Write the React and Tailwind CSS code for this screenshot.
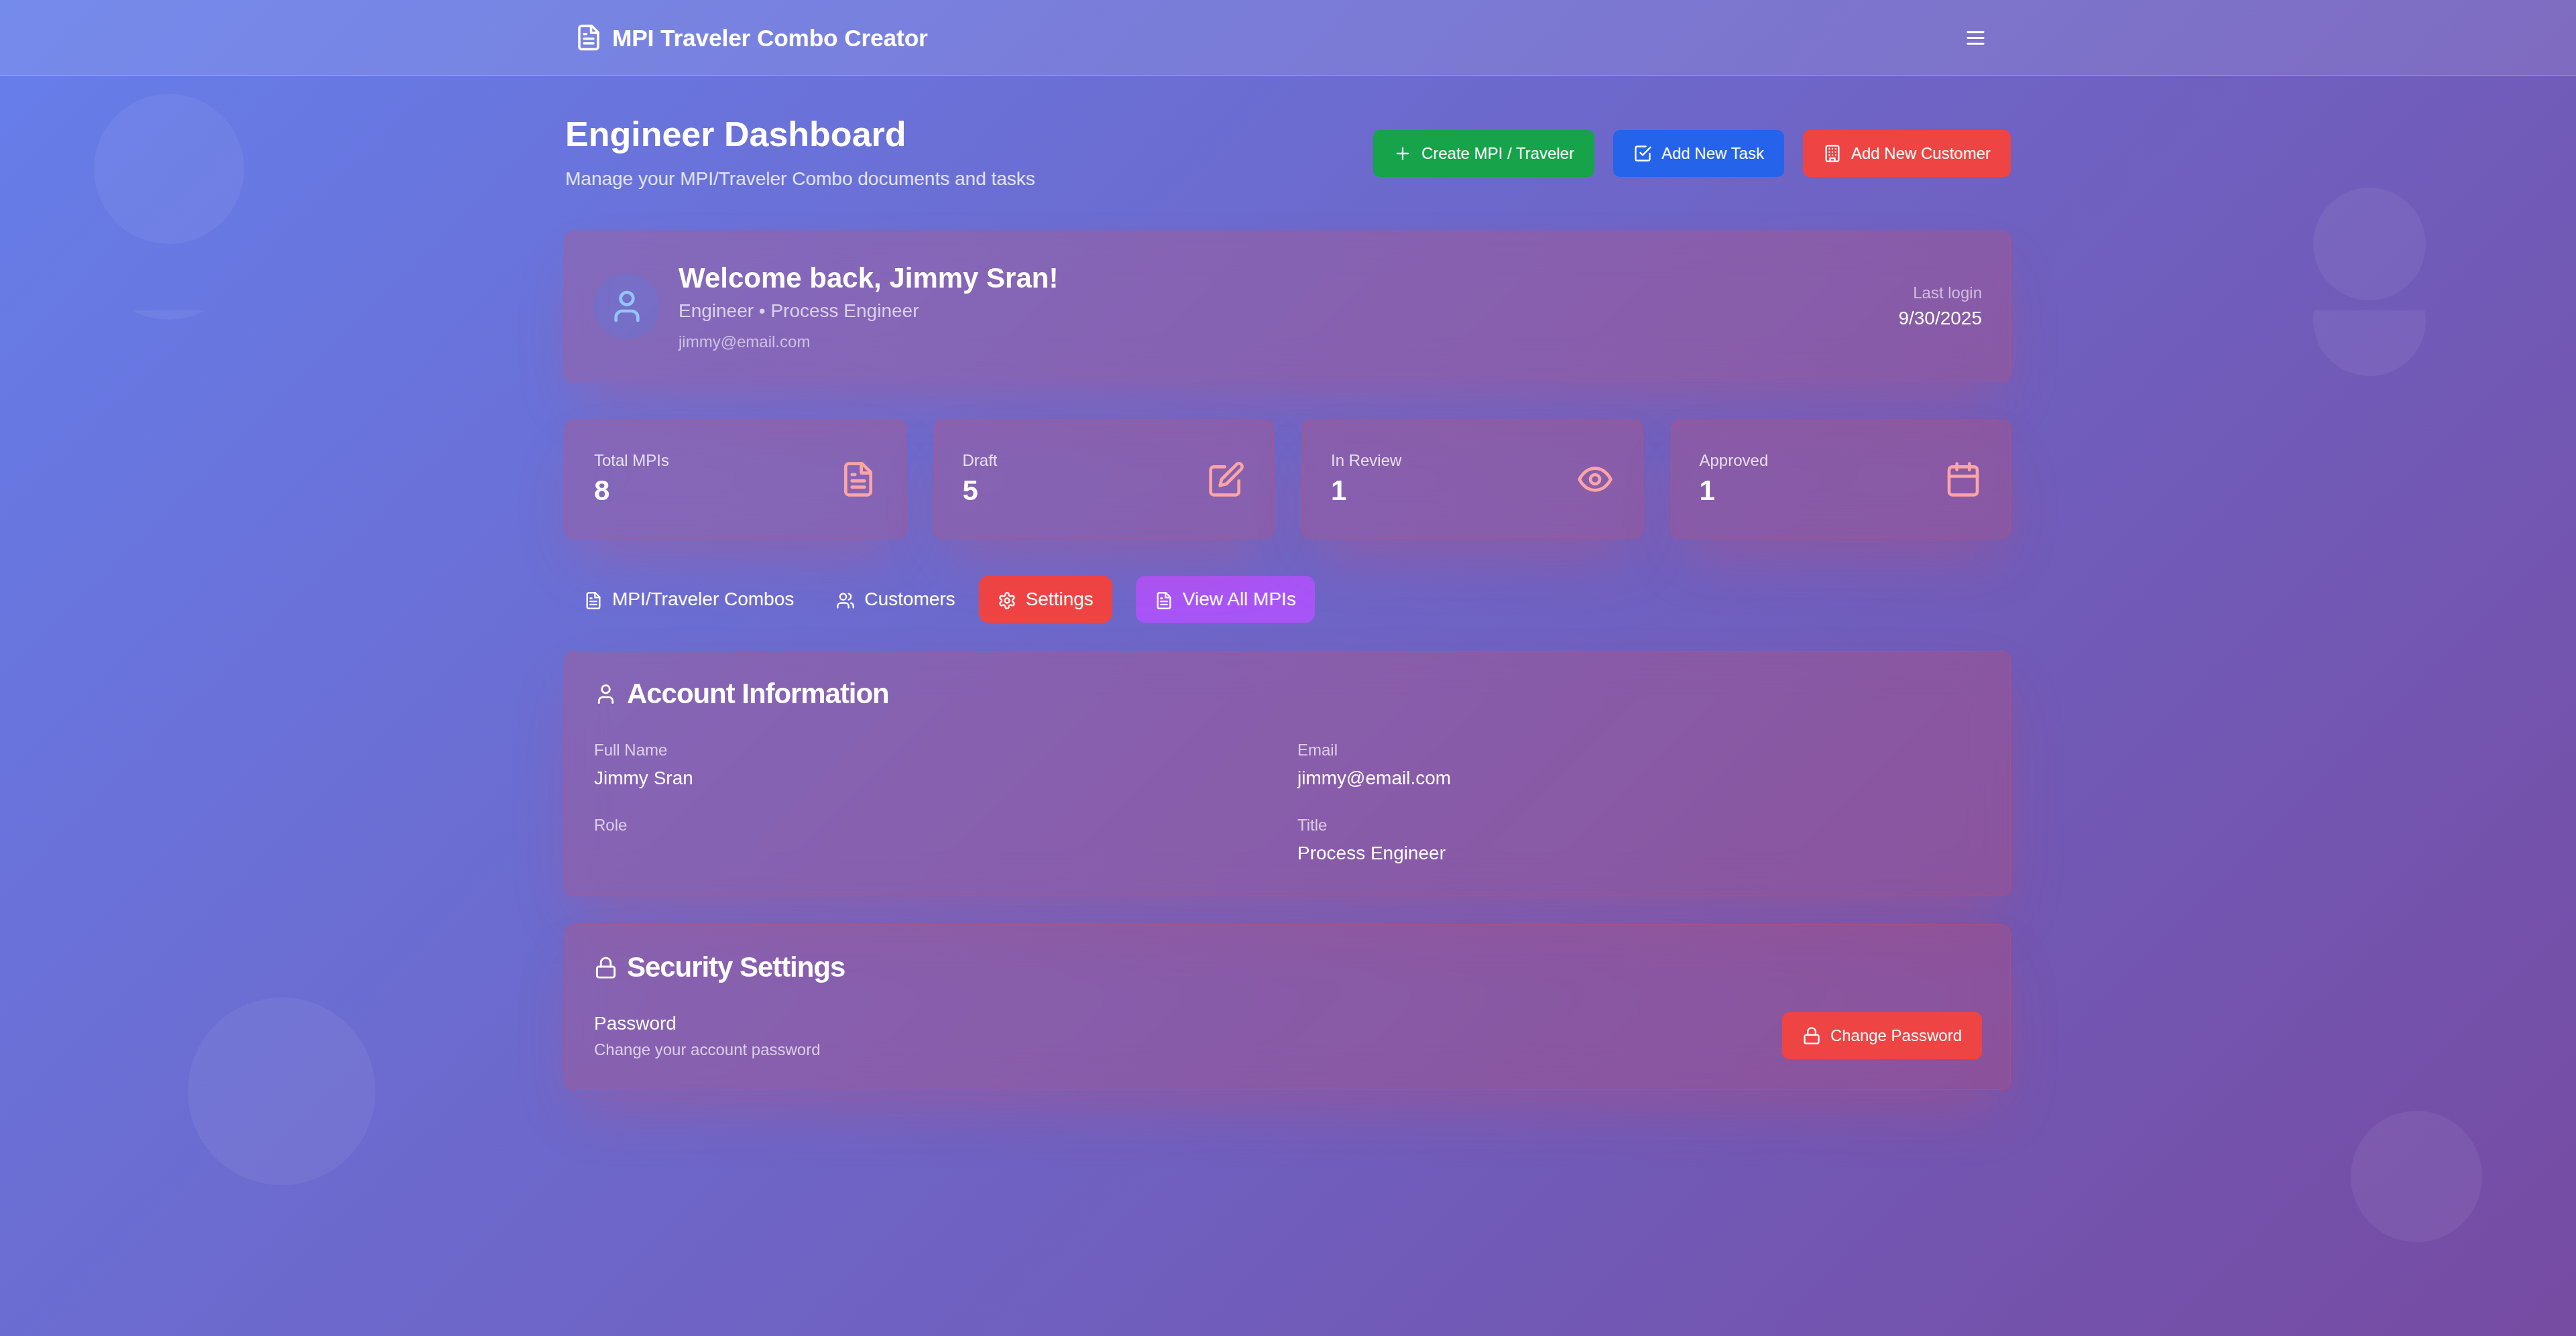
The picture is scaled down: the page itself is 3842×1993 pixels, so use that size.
import React from "react";
import { Lock, Plus, User, Users } from "lucide-react";

const svgProps = {
  xmlns: "http://www.w3.org/2000/svg",
  viewBox: "0 0 24 24",
  fill: "none",
  stroke: "currentColor",
  strokeWidth: 2,
  strokeLinecap: "round",
  strokeLinejoin: "round",
  "aria-hidden": true,
};

function FileIcon({ className }) {
  return (
    <svg {...svgProps} className={className}>
      <path d="M14.5 2H6a2 2 0 0 0-2 2v16a2 2 0 0 0 2 2h12a2 2 0 0 0 2-2V7.5L14.5 2z" />
      <polyline points="14 2 14 8 20 8" />
      <line x1="16" x2="8" y1="13" y2="13" />
      <line x1="16" x2="8" y1="17" y2="17" />
      <line x1="10" x2="8" y1="9" y2="9" />
    </svg>
  );
}

function EditIcon({ className }) {
  return (
    <svg {...svgProps} className={className}>
      <path d="M11 4H4a2 2 0 0 0-2 2v14a2 2 0 0 0 2 2h14a2 2 0 0 0 2-2v-7" />
      <path d="M18.5 2.5a2.12 2.12 0 0 1 3 3L12 15l-4 1 1-4Z" />
    </svg>
  );
}

function EyeIcon({ className }) {
  return (
    <svg {...svgProps} className={className}>
      <path d="M2 12s3-7 10-7 10 7 10 7-3 7-10 7-10-7-10-7Z" />
      <circle cx="12" cy="12" r="3" />
    </svg>
  );
}

function CalendarIcon({ className }) {
  return (
    <svg {...svgProps} className={className}>
      <rect width="18" height="18" x="3" y="4" rx="2" ry="2" />
      <line x1="16" x2="16" y1="2" y2="6" />
      <line x1="8" x2="8" y1="2" y2="6" />
      <line x1="3" x2="21" y1="10" y2="10" />
    </svg>
  );
}

function CheckSquareIcon({ className }) {
  return (
    <svg {...svgProps} className={className}>
      <path d="m9 11 3 3L22 4" />
      <path d="M21 12v7a2 2 0 0 1-2 2H5a2 2 0 0 1-2-2V5a2 2 0 0 1 2-2h11" />
    </svg>
  );
}

function BuildingIcon({ className }) {
  return (
    <svg {...svgProps} className={className}>
      <rect width="16" height="20" x="4" y="2" rx="2" ry="2" />
      <path d="M9 22v-4h6v4" />
      <path d="M8 6h.01M16 6h.01M12 6h.01M12 10h.01M12 14h.01M16 10h.01M16 14h.01M8 10h.01M8 14h.01" />
    </svg>
  );
}

function MenuIcon({ className }) {
  return (
    <svg {...svgProps} className={className}>
      <line x1="4" x2="20" y1="12" y2="12" />
      <line x1="4" x2="20" y1="6" y2="6" />
      <line x1="4" x2="20" y1="18" y2="18" />
    </svg>
  );
}

function SettingsIcon({ className }) {
  return (
    <svg {...svgProps} className={className}>
      <path d="M12.22 2h-.44a2 2 0 0 0-2 2v.18a2 2 0 0 1-1 1.73l-.43.25a2 2 0 0 1-2 0l-.15-.08a2 2 0 0 0-2.73.73l-.22.38a2 2 0 0 0 .73 2.73l.15.1a2 2 0 0 1 1 1.72v.51a2 2 0 0 1-1 1.74l-.15.09a2 2 0 0 0-.73 2.73l.22.38a2 2 0 0 0 2.73.73l.15-.08a2 2 0 0 1 2 0l.43.25a2 2 0 0 1 1 1.73V20a2 2 0 0 0 2 2h.44a2 2 0 0 0 2-2v-.18a2 2 0 0 1 1-1.73l.43-.25a2 2 0 0 1 2 0l.15.08a2 2 0 0 0 2.73-.73l.22-.39a2 2 0 0 0-.73-2.73l-.15-.08a2 2 0 0 1-1-1.74v-.5a2 2 0 0 1 1-1.74l.15-.09a2 2 0 0 0 .73-2.73l-.22-.38a2 2 0 0 0-2.73-.73l-.15.08a2 2 0 0 1-2 0l-.43-.25a2 2 0 0 1-1-1.73V4a2 2 0 0 0-2-2z" />
      <circle cx="12" cy="12" r="3" />
    </svg>
  );
}

function Card({ className = "", children }) {
  return (
    <section
      className={`rounded-[14px] border border-[#ef4444]/40 bg-[#ef4444]/20 p-[42px] shadow-[0_44px_88px_-21px_rgba(239,68,68,0.25)] backdrop-blur-[28px] ${className}`}
    >
      {children}
    </section>
  );
}

function ActionButton({ icon: Icon, color, children }) {
  return (
    <button
      type="button"
      className={`flex h-[70px] items-center gap-3.5 rounded-[10px] px-[30px] text-[24px] font-medium whitespace-nowrap ${color}`}
    >
      <Icon className="size-7" />
      {children}
    </button>
  );
}

function TabButton({ icon: Icon, className = "", children }) {
  return (
    <button
      type="button"
      className={`rounded-[14px] px-7 py-3.5 text-[28px] leading-[42px] font-medium whitespace-nowrap ${className}`}
    >
      <Icon className="mr-3.5 inline size-7" />
      {children}
    </button>
  );
}

function CardTitle({ icon: Icon, children }) {
  return (
    <h3 className="mb-[42px] flex items-center gap-3.5 text-[42px] leading-[42px] font-semibold tracking-tight">
      <Icon className="size-[35px]" />
      {children}
    </h3>
  );
}

const stats = [
  { label: "Total MPIs", value: 8, icon: FileIcon },
  { label: "Draft", value: 5, icon: EditIcon },
  { label: "In Review", value: 1, icon: EyeIcon },
  { label: "Approved", value: 1, icon: CalendarIcon },
];

const account = [
  { label: "Full Name", value: "Jimmy Sran" },
  { label: "Email", value: "jimmy@email.com" },
  { label: "Role", value: "" },
  { label: "Title", value: "Process Engineer" },
];

function Backdrop() {
  return (
    <div className="pointer-events-none absolute inset-0 overflow-hidden" aria-hidden="true">
      <div className="absolute top-[140px] left-[140px] size-56 rounded-full bg-white/6" />
      <div className="absolute top-[463px] left-[140px] h-3.5 w-56 overflow-hidden">
        <div className="absolute bottom-0 size-56 rounded-full bg-white/6" />
      </div>
      <div className="absolute top-[280px] right-[224px] size-[168px] rounded-full bg-white/6" />
      <div className="absolute top-[463px] right-[224px] h-[98px] w-[168px] overflow-hidden">
        <div className="absolute bottom-0 size-[168px] rounded-full bg-white/6" />
      </div>
      <div className="absolute bottom-[225px] left-[280px] size-[280px] rounded-full bg-white/6" />
      <div className="absolute right-[140px] bottom-[140px] size-[196px] rounded-full bg-white/6" />
    </div>
  );
}

export default function App() {
  return (
    <div className="relative min-h-screen bg-[linear-gradient(135deg,#667eea_0%,#764ba2_100%)] font-['Liberation_Sans',Arial,sans-serif] text-white">
      <Backdrop />

      <header className="border-b border-white/20 bg-white/10">
        <div className="mx-auto flex h-28 max-w-[2240px] items-center justify-between px-14">
          <div className="flex items-center gap-3.5">
            <FileIcon className="size-[42px]" />
            <span className="text-[35px] leading-[49px] font-bold">MPI Traveler Combo Creator</span>
          </div>
          <button type="button" aria-label="Open menu" className="px-[21px] py-3.5">
            <MenuIcon className="size-[35px]" />
          </button>
        </div>
      </header>

      <main className="mx-auto max-w-[2240px] px-[42px] py-14">
        <div className="mb-14 flex items-center justify-between">
          <div>
            <h1 className="text-[52px] leading-[63px] font-bold">Engineer Dashboard</h1>
            <p className="mt-3.5 text-[28px] leading-[42px] text-white/80">
              Manage your MPI/Traveler Combo documents and tasks
            </p>
          </div>
          <div className="flex gap-7">
            <ActionButton icon={Plus} color="bg-[#16a34a]">Create MPI / Traveler</ActionButton>
            <ActionButton icon={CheckSquareIcon} color="bg-[#2563eb]">Add New Task</ActionButton>
            <ActionButton icon={BuildingIcon} color="bg-[#ef4444]">Add New Customer</ActionButton>
          </div>
        </div>

        <Card className="mb-14 flex items-center justify-between">
          <div className="flex items-center gap-7">
            <div className="flex size-[98px] items-center justify-center rounded-full bg-[#3b82f6]/20">
              <User className="size-14 text-[#93c5fd]" />
            </div>
            <div>
              <h2 className="text-[42px] leading-[56px] font-bold">Welcome back, Jimmy Sran!</h2>
              <p className="text-[28px] leading-[42px] text-white/70">Engineer • Process Engineer</p>
              <p className="mt-[7px] text-[24px] leading-[35px] text-white/60">jimmy@email.com</p>
            </div>
          </div>
          <div className="text-right">
            <p className="text-[24px] leading-[35px] text-white/60">Last login</p>
            <p className="text-[28px] leading-[42px]">9/30/2025</p>
          </div>
        </Card>

        <div className="mb-14 grid grid-cols-4 gap-[42px]">
          {stats.map(({ label, value, icon: Icon }) => (
            <Card key={label} className="flex items-center justify-between">
              <div>
                <p className="text-[24px] leading-[35px] text-white/80">{label}</p>
                <p className="text-[42px] leading-[56px] font-bold">{value}</p>
              </div>
              <Icon className="size-14 text-[#fca5a5]" />
            </Card>
          ))}
        </div>

        <nav className="mb-[42px] flex gap-[7px]">
          <TabButton icon={FileIcon}>MPI/Traveler Combos</TabButton>
          <TabButton icon={Users}>Customers</TabButton>
          <TabButton icon={SettingsIcon} className="bg-[#ef4444]">Settings</TabButton>
          <TabButton icon={FileIcon} className="ml-7 bg-[#a855f7]">View All MPIs</TabButton>
        </nav>

        <Card className="mb-[42px]">
          <CardTitle icon={User}>Account Information</CardTitle>
          <dl className="grid grid-cols-2 gap-7">
            {account.map(({ label, value }) => (
              <div key={label} className="min-h-[84px]">
                <dt className="text-[24px] leading-[42px] text-white/70">{label}</dt>
                <dd className="text-[28px] leading-[42px]">{value}</dd>
              </div>
            ))}
          </dl>
        </Card>

        <Card>
          <CardTitle icon={Lock}>Security Settings</CardTitle>
          <div className="flex items-center justify-between">
            <div>
              <p className="text-[28px] leading-[42px]">Password</p>
              <p className="text-[24px] leading-[35px] text-white/70">Change your account password</p>
            </div>
            <ActionButton icon={Lock} color="bg-[#ef4444]">Change Password</ActionButton>
          </div>
        </Card>
      </main>
    </div>
  );
}
